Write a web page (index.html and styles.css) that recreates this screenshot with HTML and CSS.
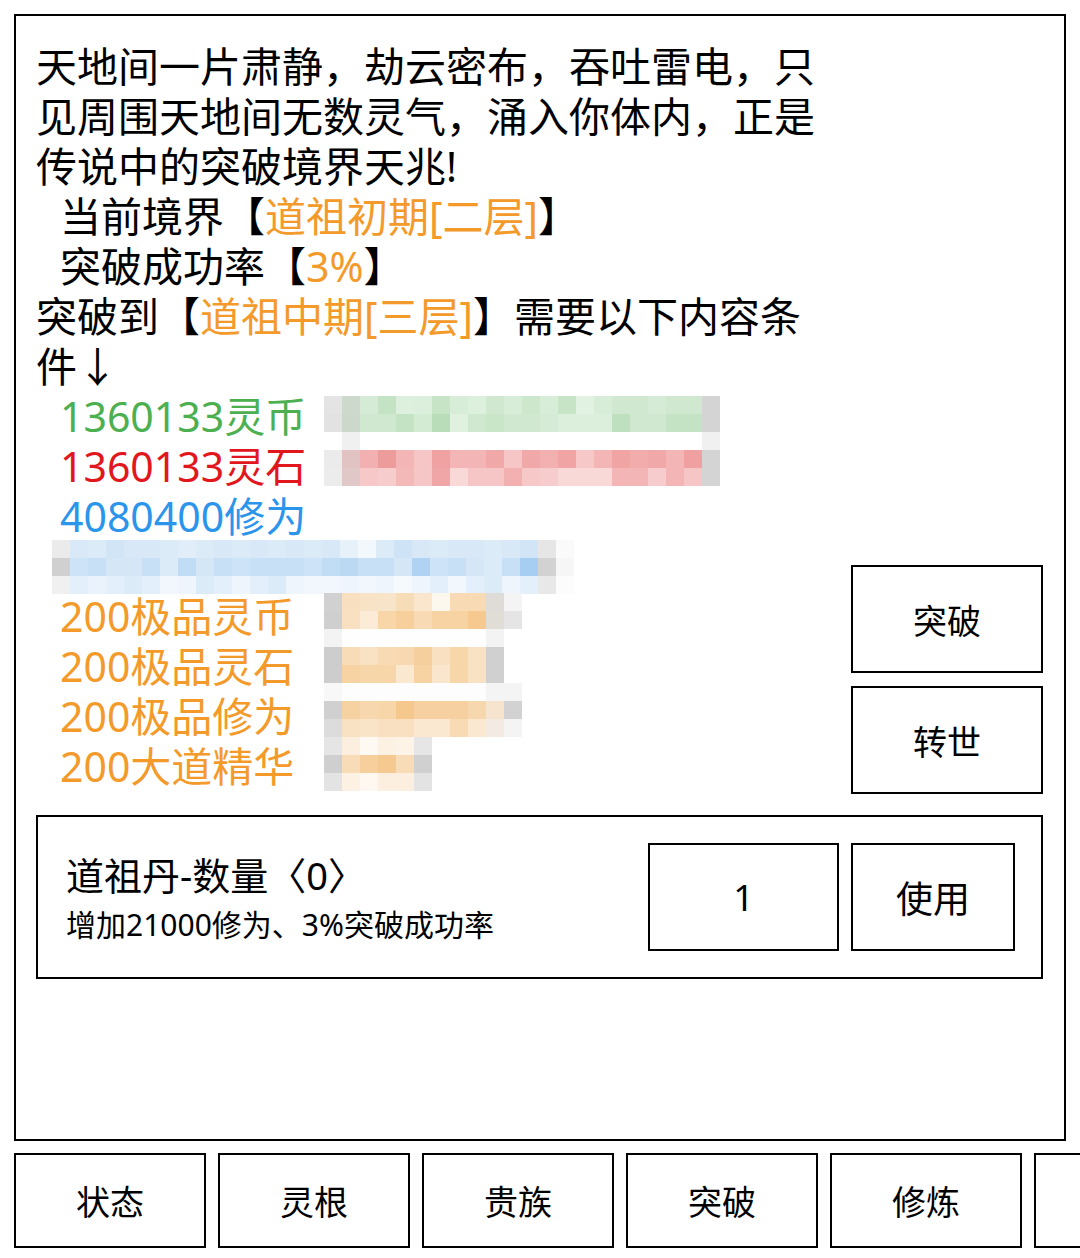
FILE: index.html
```html
<!DOCTYPE html>
<html lang="zh-CN">
<head>
<meta charset="utf-8">
<title>突破</title>
<link rel="stylesheet" href="styles.css">
</head>
<body>
  <main class="panel">
    <section class="realm">
      <div class="story">
        <div class="ln">天地间一片肃静，劫云密布，吞吐雷电，只</div>
        <div class="ln">见周围天地间无数灵气，涌入你体内，正是</div>
        <div class="ln">传说中的突破境界天兆!</div>
        <div class="ln in">当前境界【<span class="c-orange">道祖初期[二层]</span>】</div>
        <div class="ln in">突破成功率【<span class="c-orange">3%</span>】</div>
        <div class="ln">突破到【<span class="c-orange">道祖中期[三层]</span>】需要以下内容条</div>
        <div class="ln">件↓</div>
        <div class="ln in c-green">1360133灵币</div>
        <div class="ln in c-red">1360133灵石</div>
        <div class="ln in c-blue">4080400修为</div>
        <div class="ln in"></div>
        <div class="ln in c-orange">200极品灵币</div>
        <div class="ln in c-orange">200极品灵石</div>
        <div class="ln in c-orange">200极品修为</div>
        <div class="ln in c-orange">200大道精华</div>

        <div class="mz mz-green">
          <div class="g1"></div><div class="g2"></div><div class="g3"></div>
        </div>
        <div class="mz mz-red">
          <div class="r1"></div><div class="r2"></div>
        </div>
        <div class="mz mz-blue">
          <div class="b1"></div><div class="b2"></div><div class="b3"></div>
        </div>
        <div class="mz mz-orange">
          <div class="o0"></div><div class="o1"></div><div class="o2"></div>
          <div class="o3"></div><div class="o4"></div><div class="o5"></div>
          <div class="o6"></div><div class="o7"></div><div class="o8"></div>
          <div class="o9"></div><div class="o10"></div>
        </div>
      </div>
      <div class="actions">
        <button class="btn side">突破</button>
        <button class="btn side">转世</button>
      </div>
    </section>

    <section class="item">
      <div class="item-info">
        <div class="item-name">道祖丹-数量〈0〉</div>
        <div class="item-desc">增加21000修为、3%突破成功率</div>
      </div>
      <input class="qty" type="text" value="1">
      <button class="btn use">使用</button>
    </section>
  </main>

  <nav class="tabs">
    <button class="btn tab">状态</button>
    <button class="btn tab">灵根</button>
    <button class="btn tab">贵族</button>
    <button class="btn tab">突破</button>
    <button class="btn tab">修炼</button>
    <button class="btn tab" aria-label="更多"></button>
  </nav>
</body>
</html>
```
FILE: styles.css
```css
html, body {
  margin: 0;
  padding: 0;
  background: #fff;
}

body {
  height: 100vh;
  overflow: hidden;
  display: flex;
  flex-direction: column;
  font-family: "Noto Sans", "Noto Sans CJK SC", sans-serif;
  color: #000;
}

.btn {
  box-sizing: border-box;
  border: 2px solid #000;
  border-radius: 0;
  background: #fff;
  color: #000;
  font-family: inherit;
  padding: 0;
  cursor: pointer;
}

/* main framed panel */
.panel {
  flex: 1;
  box-sizing: border-box;
  margin: 14px 14px 0;
  border: 2px solid #000;
  padding: 25px 21px 0 20px;
  display: flex;
  flex-direction: column;
}

.realm {
  display: flex;
  justify-content: space-between;
  align-items: flex-end;
}

.story {
  position: relative;
  font-size: 41px;
  line-height: 50px;
}

.ln {
  height: 50px;
  white-space: nowrap;
}

.ln.in {
  padding-left: 24px;
}

.c-orange { color: #f39a2a; }
.c-green { color: #4caf50; }
.c-red { color: #e2171d; }
.c-blue { color: #2b95ec; }

/* pixelated cover blocks over the resource list */
.mz {
  position: absolute;
  display: flex;
  flex-direction: column;
}

.mz > div {
  height: 18px;
}

.mz-green { left: 288px; top: 355px; }
.mz-red { left: 288px; top: 409px; }
.mz-blue { left: 16px; top: 499px; }
.mz-orange { left: 288px; top: 552px; }

.mz-green > div,
.mz-red > div { width: 396px; }

.g1 { background: linear-gradient(90deg,#e4e4e4 0 18px,#cdd9cd 0 36px,#d5ebd5 0 54px,#c4e2c4 0 72px,#ddf0dd 0 90px,#dcefdc 0 108px,#c7e4c7 0 126px,#d8edd8 0 144px,#ddf0dd 0 162px,#cfe8cf 0 180px,#d8edd8 0 198px,#cde7cd 0 216px,#d8edd8 0 234px,#c7e4c7 0 252px,#e2f2e2 0 270px,#d8edd8 0 288px,#cfe8cf 0 306px,#cfe8cf 0 324px,#d5ebd5 0 342px,#cfe8cf 0 360px,#cfe8cf 0 378px,#d4d4d4 0 396px); }
.g2 { background: linear-gradient(90deg,#e2e2e2 0 18px,#cbd8cb 0 36px,#cfe8cf 0 54px,#cfe8cf 0 72px,#c4e2c4 0 90px,#d3ead3 0 108px,#b9ddb9 0 126px,#e0f1e0 0 144px,#cfe8cf 0 162px,#c9e6c9 0 180px,#cfe8cf 0 198px,#cfe8cf 0 216px,#d5ebd5 0 234px,#dcefdc 0 252px,#dcefdc 0 270px,#dcefdc 0 288px,#bfe0bf 0 306px,#cfe8cf 0 324px,#cfe8cf 0 342px,#c4e2c4 0 360px,#c4e2c4 0 378px,#d4d4d4 0 396px); }
.g3 { background: linear-gradient(90deg,#fff 0 18px,#f0f0f0 0 36px,#fff 0 378px,#f0f0f0 0 396px); }

.r1 { background: linear-gradient(90deg,#ebebeb 0 18px,#e2c3c3 0 36px,#f2b0b0 0 54px,#ed9c9c 0 72px,#f3b5b5 0 90px,#f6c5c5 0 108px,#f0a2a2 0 126px,#f3b5b5 0 144px,#f3b5b5 0 162px,#f0a8a8 0 180px,#f6c5c5 0 198px,#f0a8a8 0 216px,#f2b0b0 0 234px,#f0a4a4 0 252px,#f6c8c8 0 270px,#f3b5b5 0 288px,#f0a4a4 0 306px,#f2acac 0 324px,#f0a8a8 0 342px,#f3b5b5 0 360px,#f0a0a0 0 378px,#d4d4d4 0 396px); }
.r2 { background: linear-gradient(90deg,#ececec 0 18px,#e0c8c8 0 36px,#f6c8c8 0 54px,#f7cccc 0 72px,#f3b8b8 0 90px,#f6c5c5 0 108px,#f0a6a6 0 126px,#f9d8d8 0 144px,#f6c5c5 0 162px,#f6c5c5 0 180px,#f2b0b0 0 198px,#f6c8c8 0 216px,#f7cccc 0 234px,#f9d8d8 0 252px,#f9d8d8 0 270px,#f9d8d8 0 288px,#f3b5b5 0 306px,#f3b5b5 0 324px,#f7cccc 0 342px,#f3b5b5 0 360px,#f6c5c5 0 378px,#d4d4d4 0 396px); }

.mz-blue > div { width: 522px; }

.b1 { background: linear-gradient(90deg,#ebebeb 0 18px,#d9e9f7 0 36px,#dcebf8 0 54px,#d2e5f7 0 72px,#d8e8f7 0 90px,#d8e8f7 0 108px,#dcebf8 0 126px,#e1eef9 0 144px,#dcebf8 0 162px,#d8e8f7 0 180px,#dcebf8 0 198px,#d8e8f7 0 216px,#dcebf8 0 234px,#d8e8f7 0 252px,#dcebf8 0 270px,#d8e8f7 0 288px,#e7f1fa 0 306px,#f3f8fd 0 324px,#dcebf8 0 342px,#cfe3f6 0 360px,#d8e8f7 0 378px,#dcebf8 0 396px,#d8e8f7 0 414px,#d8e8f7 0 432px,#dcebf8 0 450px,#d8e8f7 0 468px,#d2e5f7 0 486px,#e6e6e6 0 504px,#fafafa 0 522px); }
.b2 { background: linear-gradient(90deg,#d0d0d0 0 18px,#cde3f7 0 36px,#c8e0f6 0 54px,#d5e7f7 0 72px,#d5e7f7 0 90px,#c8e0f6 0 108px,#dcebf8 0 126px,#c1dcf5 0 144px,#d5e7f7 0 162px,#c8e0f6 0 180px,#cde3f7 0 198px,#c8e0f6 0 216px,#c8e0f6 0 234px,#c8e0f6 0 252px,#cde3f7 0 270px,#c1dcf5 0 288px,#bcd9f4 0 306px,#c8e0f6 0 324px,#c8e0f6 0 342px,#d5e7f7 0 360px,#b0d3f3 0 378px,#cde3f7 0 396px,#c8e0f6 0 414px,#d5e7f7 0 432px,#dcebf8 0 450px,#c8e0f6 0 468px,#a6cdf2 0 486px,#d2d2d2 0 504px,#f6f6f6 0 522px); }
.b3 { background: linear-gradient(90deg,#f0f0f0 0 18px,#e3effa 0 36px,#eaf3fb 0 54px,#e3effa 0 72px,#dcebf8 0 90px,#e3effa 0 108px,#f2f7fd 0 126px,#eef5fc 0 144px,#dcebf8 0 162px,#e3effa 0 180px,#eef5fc 0 198px,#e3effa 0 216px,#dcebf8 0 234px,#eef5fc 0 252px,#f2f7fd 0 270px,#f2f7fd 0 288px,#eef5fc 0 306px,#f2f7fd 0 324px,#eef5fc 0 342px,#f7fafd 0 360px,#eef5fc 0 378px,#e3effa 0 396px,#f2f7fd 0 414px,#e3effa 0 432px,#dcebf8 0 450px,#eef5fc 0 468px,#e3effa 0 486px,#e8e8e8 0 504px,#fcfcfc 0 522px); }

.o0, .o1, .o5, .o6, .o7 { width: 198px; }
.o2, .o3, .o4 { width: 180px; }
.o8, .o9, .o10 { width: 108px; }

.o0 { background: linear-gradient(90deg,#d1d1d1 0 18px,#f8dfbf 0 36px,#f9e3c6 0 54px,#f8e4c8 0 72px,#f7dcb8 0 90px,#f9e6cc 0 108px,#fdf8ee 0 126px,#f8dbb5 0 144px,#f8dbb5 0 162px,#dfdbd6 0 180px,#f4f4f4 0 198px); }
.o1 { background: linear-gradient(90deg,#cfcfcf 0 18px,#f9e0c0 0 36px,#fcebd6 0 54px,#f8d6a8 0 72px,#f6cf9c 0 90px,#f8dbb5 0 108px,#f7d3a4 0 126px,#f7d3a4 0 144px,#f5c98f 0 162px,#e0dcd6 0 180px,#e5e5e5 0 198px); }
.o2 { background: linear-gradient(90deg,#f3f3f3 0 18px,#fefefe 0 162px,#f3f3f3 0 180px); }
.o3 { background: linear-gradient(90deg,#cdcdcd 0 18px,#f8dcb8 0 36px,#f9e2c4 0 54px,#f8dbb5 0 72px,#f7d8b0 0 90px,#f5cf9d 0 108px,#f8e0c0 0 126px,#f7d6aa 0 144px,#f9e2c4 0 162px,#d0d0d0 0 180px); }
.o4 { background: linear-gradient(90deg,#cdcdcd 0 18px,#f7d3a4 0 36px,#f7d6aa 0 54px,#f7d6aa 0 72px,#fae8d0 0 90px,#f7d3a4 0 108px,#fae6cc 0 126px,#f7d6aa 0 144px,#f9e2c4 0 162px,#d0d0d0 0 180px); }
.o5 { background: linear-gradient(90deg,#f8f8f8 0 18px,#fdfdfd 0 162px,#f4f4f4 0 198px); }
.o6 { background: linear-gradient(90deg,#d0d0d0 0 18px,#f6d2a2 0 36px,#f7d8ae 0 54px,#f7d6aa 0 72px,#f5c98e 0 90px,#f6d0a0 0 108px,#f6d0a0 0 126px,#f6d0a0 0 144px,#f7d8ae 0 162px,#f6e4cf 0 180px,#d2d2d2 0 198px); }
.o7 { background: linear-gradient(90deg,#dcdcdc 0 18px,#f9e2c4 0 36px,#fae4c8 0 54px,#f8e0c0 0 72px,#f8e0c0 0 90px,#fae8d0 0 108px,#fae8d0 0 126px,#f8dbb5 0 144px,#fae8d0 0 162px,#f3ebe1 0 180px,#f4f4f4 0 198px); }
.o8 { background: linear-gradient(90deg,#e5e5e5 0 18px,#fcefdf 0 36px,#fef9f2 0 54px,#fcf1e3 0 72px,#fdf3e6 0 90px,#e6e6e6 0 108px); }
.o9 { background: linear-gradient(90deg,#cfcfcf 0 18px,#f8dcb8 0 36px,#f6cf9c 0 54px,#f5c990 0 72px,#f8dcb8 0 90px,#d0d0d0 0 108px); }
.o10 { background: linear-gradient(90deg,#e3e3e3 0 18px,#fcf1e3 0 36px,#fef8f0 0 54px,#fcefdf 0 72px,#fcefdf 0 90px,#e3e3e3 0 108px); }

/* right column actions */
.actions {
  display: flex;
  flex-direction: column;
  gap: 13px;
  margin-bottom: -3px;
}

.side {
  width: 192px;
  height: 108px;
  font-size: 34px;
}

/* consumable item row */
.item {
  box-sizing: border-box;
  margin-top: 24px;
  height: 164px;
  border: 2px solid #000;
  display: flex;
  align-items: center;
  padding: 0 26px 0 28px;
  gap: 12px;
}

.item-info {
  flex: 1;
  padding-top: 2px;
}

.item-name {
  font-size: 38px;
  line-height: 48px;
  white-space: nowrap;
}

.item-desc {
  font-size: 30px;
  line-height: 40px;
  margin-top: 6px;
  white-space: nowrap;
}

.qty {
  box-sizing: border-box;
  width: 191px;
  height: 108px;
  border: 2px solid #000;
  border-radius: 0;
  outline: none;
  background: #fff;
  text-align: center;
  font-family: inherit;
  font-size: 36px;
  color: #000;
  padding: 0;
}

.use {
  width: 164px;
  height: 108px;
  font-size: 37px;
}

/* bottom navigation */
.tabs {
  flex: 0 0 95px;
  display: flex;
  gap: 12px;
  margin: 12px 0 10px;
  padding-left: 14px;
  overflow: hidden;
}

.tab {
  flex: 0 0 192px;
  height: 95px;
  font-size: 34px;
}
```
